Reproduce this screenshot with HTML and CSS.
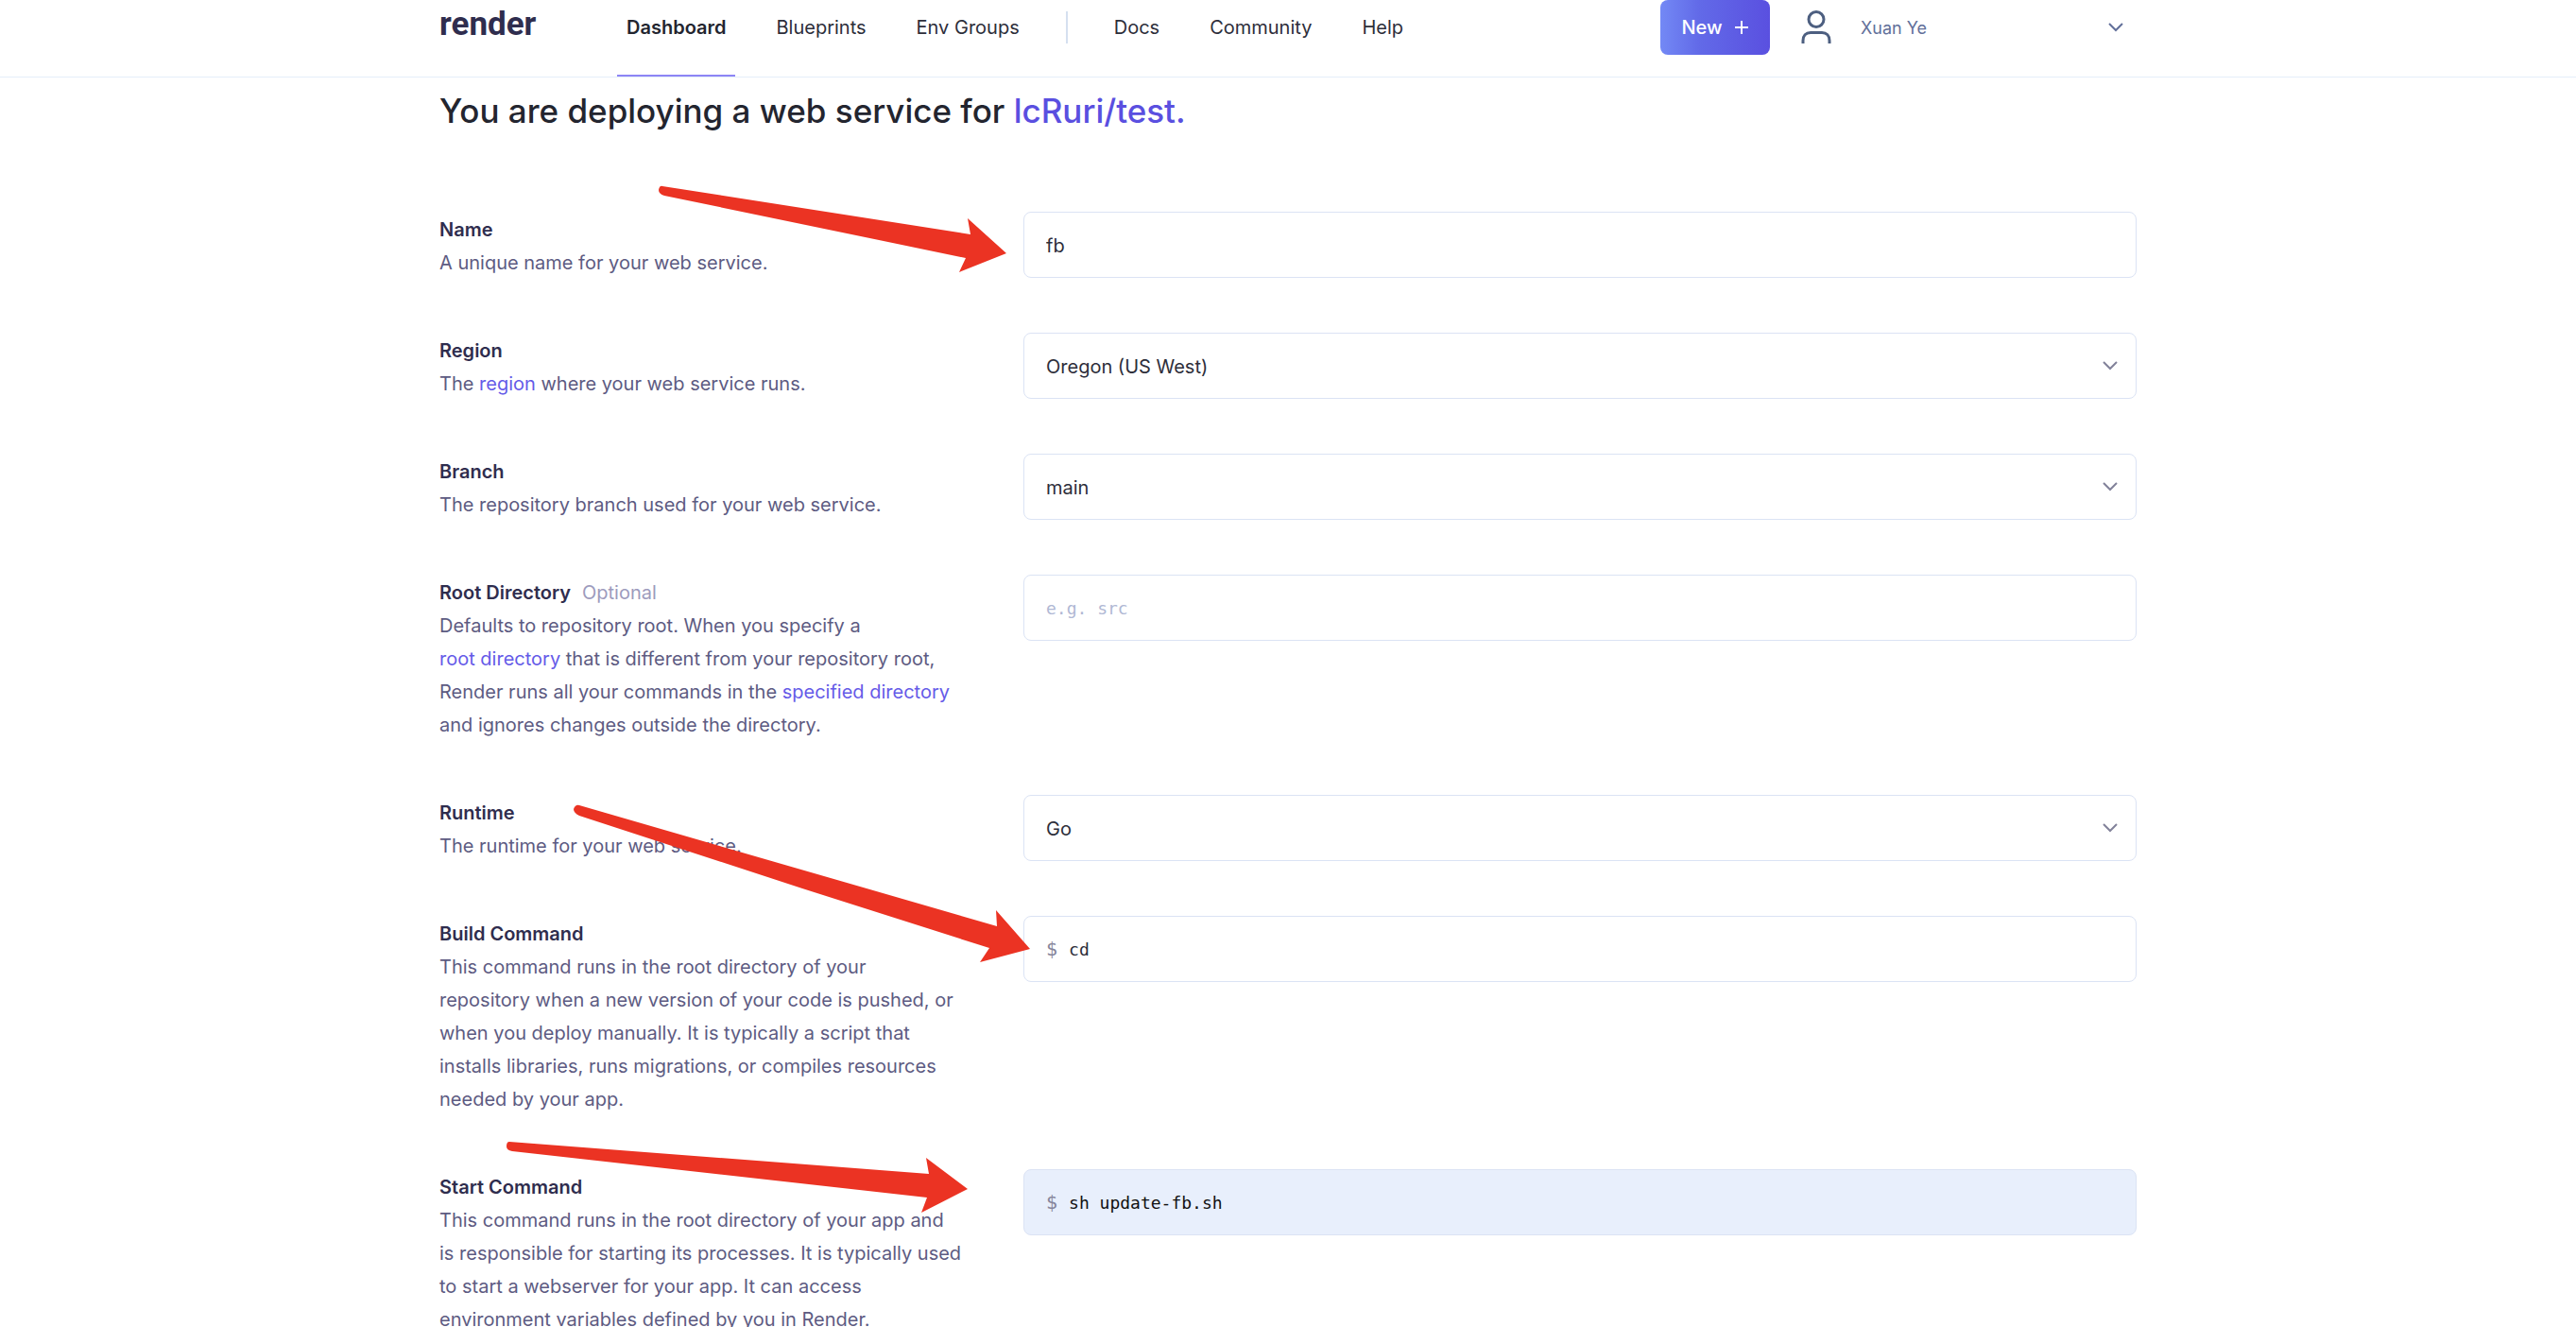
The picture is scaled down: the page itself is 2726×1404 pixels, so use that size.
FILE: index.html
```html
<!DOCTYPE html>
<html lang="en">
<head>
<meta charset="utf-8">
<title>Render Dashboard</title>
<link rel="stylesheet" href="styles.css">
</head>
<body>
<header class="topbar">
  <div class="container topbar-inner">
    <a class="logo" href="#">render</a>
    <nav class="nav">
      <a class="nav-link active" href="#">Dashboard</a>
      <a class="nav-link" href="#">Blueprints</a>
      <a class="nav-link" href="#">Env Groups</a>
      <span class="divider"></span>
      <a class="nav-link" href="#">Docs</a>
      <a class="nav-link" href="#">Community</a>
      <a class="nav-link" href="#">Help</a>
    </nav>
    <div class="account">
      <button class="new-btn" type="button">New
        <svg width="16" height="16" viewBox="0 0 16 16" fill="none" stroke="currentColor" stroke-width="2"><path d="M8 1v14M1 8h14"/></svg>
      </button>
      <button class="user-btn" type="button">
        <svg class="avatar" width="32" height="36" viewBox="0 0 32 36" fill="none" stroke="#4d5f80" stroke-width="3"><ellipse cx="16" cy="9.500" rx="8" ry="8"/><path d="M2 35v-3c0-5 3-8.500 8-8.500h12c5 0 8 3.500 8 8.500v3"/></svg>
        <span class="user-name">Xuan Ye</span>
        <svg width="16" height="10" viewBox="0 0 16 10" fill="none" stroke="#62709a" stroke-width="2"><path d="M1 1l7 7 7-7"/></svg>
      </button>
    </div>
  </div>
</header>
<main class="container">
  <h1 class="title">You are deploying a web service for <a href="#">lcRuri/test.</a></h1>
  <form class="form">
    <div class="row">
      <div class="info"><label for="name">Name</label><p>A unique name for your web service.</p></div>
      <div class="field"><input id="name" type="text" value="fb"></div>
    </div>
    <div class="row">
      <div class="info"><label for="region">Region</label><p>The <a href="#">region</a> where your web service runs.</p></div>
      <div class="field"><select id="region"><option>Oregon (US West)</option></select><svg class="chevron" width="16" height="10" viewBox="0 0 16 10"><path d="M1 1l7 7 7-7"/></svg></div>
    </div>
    <div class="row">
      <div class="info"><label for="branch">Branch</label><p>The repository branch used for your web service.</p></div>
      <div class="field"><select id="branch"><option>main</option></select><svg class="chevron" width="16" height="10" viewBox="0 0 16 10"><path d="M1 1l7 7 7-7"/></svg></div>
    </div>
    <div class="row">
      <div class="info"><label for="root">Root Directory</label><span class="optional">Optional</span>
        <p>Defaults to repository root. When you specify a<br><a href="#">root directory</a> that is different from your repository root,<br>Render runs all your commands in the <a href="#">specified directory</a><br>and ignores changes outside the directory.</p></div>
      <div class="field mono"><input id="root" type="text" placeholder="e.g. src"></div>
    </div>
    <div class="row">
      <div class="info"><label for="runtime">Runtime</label><p>The runtime for your web service.</p></div>
      <div class="field"><select id="runtime"><option>Go</option></select><svg class="chevron" width="16" height="10" viewBox="0 0 16 10"><path d="M1 1l7 7 7-7"/></svg></div>
    </div>
    <div class="row">
      <div class="info"><label for="build">Build Command</label>
        <p>This command runs in the root directory of your<br>repository when a new version of your code is pushed, or<br>when you deploy manually. It is typically a script that<br>installs libraries, runs migrations, or compiles resources<br>needed by your app.</p></div>
      <div class="field mono command"><span class="prompt">$</span><input id="build" type="text" value="cd"></div>
    </div>
    <div class="row">
      <div class="info"><label for="start">Start Command</label>
        <p>This command runs in the root directory of your app and<br>is responsible for starting its processes. It is typically used<br>to start a webserver for your app. It can access<br>environment variables defined by you in Render.</p></div>
      <div class="field mono command filled"><span class="prompt">$</span><input id="start" type="text" value="sh update-fb.sh"></div>
    </div>
  </form>
  <svg class="arrows" width="640" height="1140" viewBox="465 160 640 1140" fill="#eb3323" aria-hidden="true">
    <path d="M701 197L1027 248L1024 231L1065 268L1015 288L1022 273L703 207Q697 205 697 201Q698 196 701 197Z"/>
    <path d="M613 852L917 940L1055 980L1054 963L1090 1004L1037 1018L1047 1003L849 940L613 863Q607 860 607 856Q609 851 613 852Z"/>
    <path d="M539 1208L983 1242L980 1225L1024 1258L975 1283L981 1267L542 1218Q536 1217 536 1213Q536 1208 539 1208Z"/>
  </svg>
</main>
</body>
</html>
```
FILE: styles.css
```css
* { box-sizing: border-box; }

body {
  margin: 0;
  background: #fff;
  color: #23252f;
  font-family: Inter, "Liberation Sans", sans-serif;
  font-size: 20px;
  line-height: 35px;
}

a { color: #5a4fe0; text-decoration: none; }
button, input, select { font: inherit; }

.container {
  width: 100%;
  max-width: 1796px;
  margin: 0 auto;
}

.topbar { border-bottom: 1px solid #e4eef9; }

.topbar-inner {
  display: flex;
  height: 81px;
}

.logo {
  width: 188px;
  color: #2f2d4e;
  font-family: Roboto, sans-serif;
  font-size: 35px;
  font-weight: 700;
  line-height: 52px;
}

.nav { display: flex; gap: 33px; }

.nav-link {
  height: 81px;
  padding: 12px 10px;
  border-bottom: 2px solid transparent;
  color: #2d2e3a;
}

.nav-link.active {
  border-color: #8d85f5;
  color: #23252f;
  font-weight: 600;
}

.divider {
  width: 2px;
  height: 34px;
  margin: 12px 6px 0;
  background: #d5e0f0;
}

.account {
  display: flex;
  align-items: flex-start;
  width: 504px;
  margin-left: auto;
}

.new-btn {
  display: flex;
  align-items: center;
  justify-content: center;
  gap: 12px;
  width: 116px;
  height: 58px;
  padding: 0;
  border: 0;
  border-radius: 8px;
  background: linear-gradient(90deg, #7389f5, #626ae8 35%, #5a50e0);
  color: #fff;
  font-weight: 500;
}

.user-btn {
  display: flex;
  flex: 1;
  align-items: center;
  height: 58px;
  padding: 0 14px 0 33px;
  border: 0;
  background: none;
  color: #62709a;
  font-size: 18px;
}

.user-name { margin: 0 auto 0 31px; }

.title {
  margin: 0;
  padding: 5px 0 77px;
  font-size: 35px;
  font-weight: 500;
  line-height: 60px;
}

main { position: relative; }

.form { display: grid; gap: 58px; }

.row {
  display: grid;
  grid-template-columns: 560px 1fr;
  gap: 58px;
  align-items: start;
}

.info {
  margin-bottom: -2px;
  padding-top: 2px;
  color: #5d5b82;
  white-space: nowrap;
}

.info p { margin: 0; }
.info label { color: #2f2d4e; font-weight: 600; }
.info a { color: #655be8; }

.optional {
  margin-left: 12px;
  color: #9d9bbd;
}

.field {
  position: relative;
  display: flex;
  height: 70px;
  border: 1px solid #dbe3f4;
  border-radius: 8px;
  overflow: hidden;
}

.field input,
.field select {
  flex: 1;
  min-width: 0;
  padding: 2px 23px 0;
  border: 0;
  outline: 0;
  background: none;
  color: #2d2e3a;
  appearance: none;
}

.mono {
  font-family: "DejaVu Sans Mono", monospace;
  font-size: 18px;
}

.mono input { padding-top: 0; }
.mono input::placeholder { color: #b0b8d4; opacity: 1; }
.command { align-items: center; padding-left: 23px; }
.command input { align-self: stretch; padding-left: 12px; }
.prompt { color: #85859a; font-size: 20px; }
.filled { background: #e8effc; }
.filled input { color: #111; }

.chevron {
  position: absolute;
  top: 29px;
  right: 19px;
  fill: none;
  stroke: #82829a;
  stroke-width: 2;
  pointer-events: none;
}

.arrows {
  position: absolute;
  top: 78px;
  left: 0;
  pointer-events: none;
}
```
